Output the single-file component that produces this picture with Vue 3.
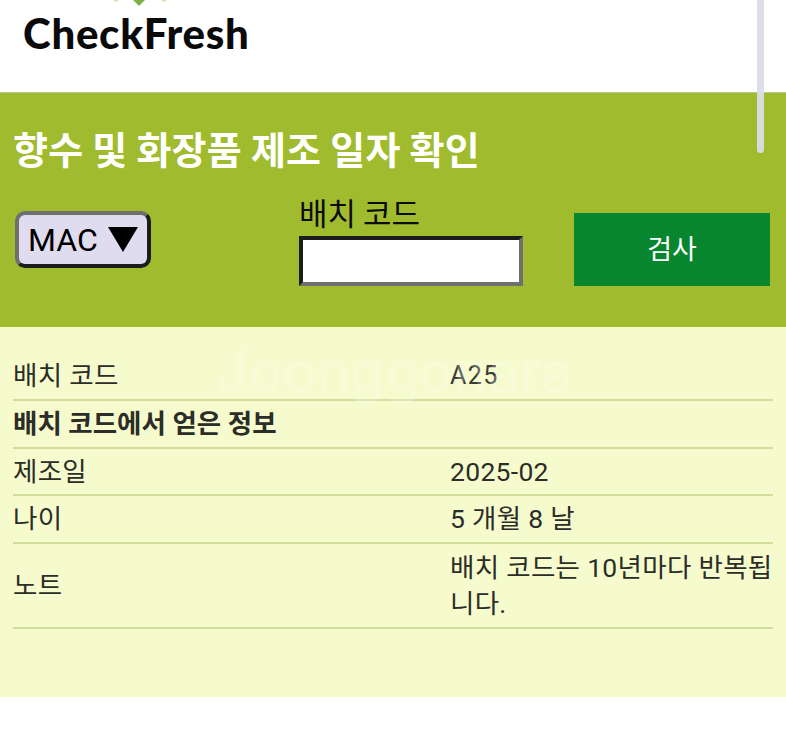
<template>
  <div class="page">
    <header class="top">
      <svg class="leaf" width="70" height="6" viewBox="0 0 70 6">
        <path d="M20 0 L26 6 L32 0 Z" fill="#7fb04a" />
        <path d="M0 0 L3 2 L6 0 Z M48 0 L51 2 L54 0 Z" fill="#cfe0b5" />
      </svg>
      <div class="logo">CheckFresh</div>
    </header>

    <section class="check">
      <h1>향수 및 화장품 제조 일자 확인</h1>
      <div class="form">
        <button class="brand">
          <span>MAC</span>
          <svg width="30" height="25" viewBox="0 0 30 25"><path d="M0 0 H30 L15 25 Z" fill="#000" /></svg>
        </button>
        <div class="batch">
          <label for="code">배치 코드</label>
          <input id="code" type="text" />
        </div>
        <button class="go">검사</button>
      </div>
    </section>

    <section class="result">
      <div v-for="row in rows" :key="row.label" :class="['row', { head: row.head, tall: row.tall, short: row.short }]">
        <span>{{ row.label }}</span>
        <span v-if="!row.head" :class="{ code: row.value === 'A25' }">{{ row.value }}</span>
      </div>
      <div class="mark">Joonggonara</div>
    </section>

    <div class="scroll"></div>
  </div>
</template>

<script setup>
const rows = [
  { label: '배치 코드', value: 'A25' },
  { label: '배치 코드에서 얻은 정보', head: true },
  { label: '제조일', value: '2025-02', short: true },
  { label: '나이', value: '5 개월 8 날' },
  { label: '노트', value: '배치 코드는 10년마다 반복됩니다.', tall: true }
]
</script>

<style>
html, body { margin: 0; background: #fff; overflow: hidden; }
</style>

<style scoped>
.page {
  position: relative; width: 786px; height: 750px; overflow: hidden;
  font-family: Roboto, "Noto Sans CJK KR", sans-serif;
  background: #fff;
}
.top { height: 92px; box-sizing: border-box; padding: 10px 0 0 23px; }
.leaf { position: absolute; left: 113px; top: 0; }
.logo {
  font-family: Lato, sans-serif; font-weight: 900; font-size: 42px;
  line-height: 46px; letter-spacing: 0.7px; color: #0a0a0a;
}
.check { height: 235px; background: #a0bc2e; box-sizing: border-box; padding: 33px 16px 0 13px; border-top: 1px solid #bcc98c; }
.check h1 {
  margin: 0; color: #fff; font-size: 38px; line-height: 44px; font-weight: 700; letter-spacing: 0.25px;
  font-family: "Noto Sans CJK KR", sans-serif;
}
.form { display: flex; margin-top: 20px; height: 96px; }
.brand {
  display: flex; align-items: center; gap: 10px;
  margin: 21px 0 0 2px; width: 136px; height: 57px; box-sizing: border-box;
  border: 4px solid; border-color: #6f6f6f #1c1c1c #1c1c1c #6f6f6f; border-radius: 10px;
  background: #dfdcf0; color: #000; font-size: 32px; padding: 0 0 0 9px;
  font-family: Roboto, sans-serif;
}
.batch { margin-left: 148px; width: 224px; display: flex; flex-direction: column; }
.batch label {
  font-size: 31px; line-height: 40px; color: #0c0c0c; height: 32px; margin-top: 2px;
  font-family: "Noto Sans CJK KR", sans-serif;
}
.batch input {
  flex: none;
  width: 224px; height: 50px; box-sizing: border-box; background: #fff; padding: 0;
  border: 4px solid; border-color: #1c1c1c #6f6f6f #6f6f6f #1c1c1c; margin-top: 12px;
}
.go {
  margin: 23px 0 0 51px; width: 196px; height: 73px; border: none; padding: 0 0 4px;
  background: #07862f; color: #fff; font-size: 27px;
  font-family: "Noto Sans CJK KR", sans-serif;
}
.result { position: relative; height: 370px; box-sizing: border-box; background: #f5fbcc; padding: 26px 13px 0; }
.row {
  display: grid; grid-template-columns: 437px 1fr; align-items: center;
  height: 48px; box-sizing: border-box; border-bottom: 2px solid #d3dd9c;
  font-size: 26.5px; line-height: 36px; letter-spacing: 0.3px; color: #2c2c28;
  font-family: Roboto, "Noto Sans CJK KR", sans-serif;
}
.row.head { font-weight: 700; letter-spacing: 0; }
.row.short { height: 47px; }
.row.tall { height: 85px; }
.row .code { letter-spacing: 1.5px; font-size: 25px; color: #3a3a36; }
.mark {
  position: absolute; left: 216px; top: 10px; font-family: Inter, sans-serif; font-weight: 500;
  font-size: 57px; line-height: 70px; letter-spacing: -0.5px; color: rgba(255, 255, 255, 0.22);
}
.scroll { position: absolute; left: 757px; top: -10px; width: 7px; height: 163px; background: rgba(220, 220, 232, 0.95); border-radius: 4px; }
</style>
